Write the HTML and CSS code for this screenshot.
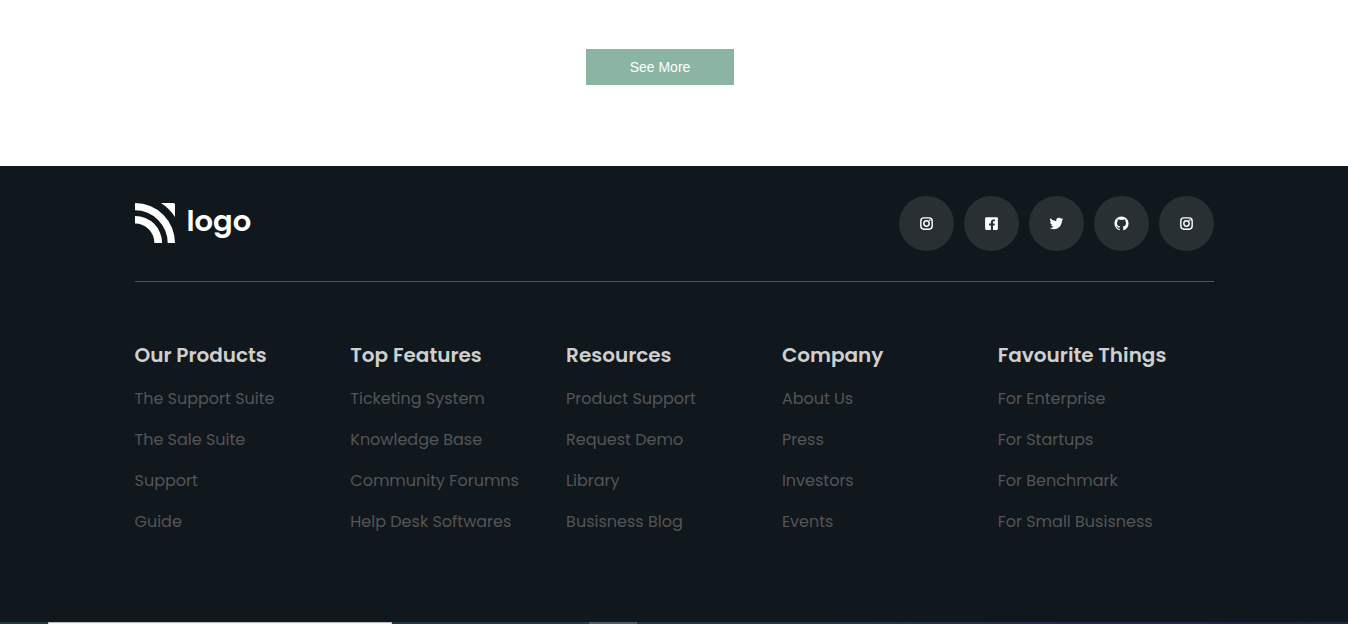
FILE: index.html
```html
<!DOCTYPE html>
<html lang="en">
<head>
<meta charset="utf-8">
<meta name="viewport" content="width=device-width, initial-scale=1">
<title>Logo</title>
<link rel="stylesheet" href="styles.css">
</head>
<body>
<svg class="sprite" aria-hidden="true">
  <symbol id="instagram" viewBox="0 0 24 24">
    <rect x="4" y="4" width="16" height="16" rx="4.3" fill="none" stroke="currentColor" stroke-width="2"/>
    <circle cx="12" cy="12" r="3.8" fill="none" stroke="currentColor" stroke-width="2"/>
    <circle cx="16.8" cy="7.2" r="1.2" fill="currentColor"/>
  </symbol>
  <symbol id="facebook" viewBox="0 0 24 24">
    <path fill="currentColor" d="M19.500 3h-15A1.500 1.500 0 0 0 3 4.500v15A1.500 1.500 0 0 0 4.500 21h6.600v-6.300H8.600v-2.700h2.500v-1.900c0-2.500 1.500-3.800 3.700-3.800.7 0 1.400.1 2.100.2v2.400h-1.200c-1.200 0-1.600.7-1.600 1.500v1.600h2.700l-.4 2.700h-2.300V21h5.400a1.500 1.500 0 0 0 1.500-1.500v-15A1.500 1.500 0 0 0 19.500 3z"/>
  </symbol>
  <symbol id="twitter" viewBox="0 0 24 24">
    <path fill="currentColor" d="M19.633 7.997c.013.175.013.349.013.523 0 5.325-4.053 11.461-11.46 11.461-2.282 0-4.402-.661-6.186-1.809.324.037.636.05.973.05a8.07 8.07 0 0 0 5.001-1.721 4.036 4.036 0 0 1-3.767-2.793c.249.037.499.062.761.062.361 0 .724-.05 1.061-.137a4.027 4.027 0 0 1-3.23-3.953v-.05c.537.299 1.16.486 1.82.511a4.022 4.022 0 0 1-1.796-3.354c0-.748.199-1.434.548-2.032a11.457 11.457 0 0 0 8.306 4.215c-.062-.3-.1-.611-.1-.923a4.026 4.026 0 0 1 4.028-4.028c1.16 0 2.207.486 2.943 1.272a7.957 7.957 0 0 0 2.556-.973 4.02 4.02 0 0 1-1.771 2.22 8.073 8.073 0 0 0 2.319-.624 8.645 8.645 0 0 1-2.019 2.083z"/>
  </symbol>
  <symbol id="github" viewBox="0 0 24 24">
    <path fill="currentColor" d="M12.026 2c-5.509 0-9.974 4.465-9.974 9.974 0 4.406 2.857 8.145 6.821 9.465.499.09.679-.217.679-.481 0-.237-.008-.865-.011-1.696-2.775.602-3.361-1.338-3.361-1.338-.452-1.152-1.107-1.459-1.107-1.459-.905-.619.069-.605.069-.605 1.002.07 1.527 1.028 1.527 1.028.89 1.524 2.336 1.084 2.902.829.091-.645.351-1.085.635-1.334-2.214-.251-4.542-1.107-4.542-4.93 0-1.087.389-1.979 1.024-2.675-.101-.253-.446-1.268.099-2.64 0 0 .837-.269 2.742 1.021a9.582 9.582 0 0 1 2.496-.336 9.554 9.554 0 0 1 2.496.336c1.906-1.291 2.742-1.021 2.742-1.021.545 1.372.203 2.387.099 2.64.64.696 1.024 1.587 1.024 2.675 0 3.833-2.33 4.675-4.552 4.922.355.308.675.916.675 1.846 0 1.334-.012 2.41-.012 2.737 0 .267.178.577.687.479C19.146 20.115 22 16.379 22 11.974 22 6.465 17.535 2 12.026 2z"/>
  </symbol>
</svg>

<main class="more">
  <button class="more-button" type="button">See More</button>
</main>

<footer class="footer">
  <div class="footer-inner">
    <div class="footer-top">
      <a class="logo" href="#">
        <svg class="logo-mark" viewBox="0 0 40 40" aria-hidden="true">
          <path fill="currentColor" d="M0 0A40 40 0 0 1 40 40H32.700A32.700 32.700 0 0 0 0 7.300zM0 12.900A27.100 27.100 0 0 1 27.100 40H19.400A19.400 19.400 0 0 0 0 20.600zM26 0H38.500A1.500 1.500 0 0 1 40 1.500V14A47.700 47.700 0 0 0 26 0z"/>
        </svg>
        <span class="logo-text">logo</span>
      </a>
      <nav class="social" aria-label="Social media">
        <a class="social-link" href="#" aria-label="Instagram"><svg class="icon"><use href="#instagram"/></svg></a>
        <a class="social-link" href="#" aria-label="Facebook"><svg class="icon"><use href="#facebook"/></svg></a>
        <a class="social-link" href="#" aria-label="Twitter"><svg class="icon"><use href="#twitter"/></svg></a>
        <a class="social-link" href="#" aria-label="GitHub"><svg class="icon"><use href="#github"/></svg></a>
        <a class="social-link" href="#" aria-label="Instagram"><svg class="icon"><use href="#instagram"/></svg></a>
      </nav>
    </div>
    <div class="columns">
      <section>
        <h2 class="column-title">Our Products</h2>
        <ul class="links">
          <li><a href="#">The Support Suite</a></li>
          <li><a href="#">The Sale Suite</a></li>
          <li><a href="#">Support</a></li>
          <li><a href="#">Guide</a></li>
        </ul>
      </section>
      <section>
        <h2 class="column-title">Top Features</h2>
        <ul class="links">
          <li><a href="#">Ticketing System</a></li>
          <li><a href="#">Knowledge Base</a></li>
          <li><a href="#">Community Forumns</a></li>
          <li><a href="#">Help Desk Softwares</a></li>
        </ul>
      </section>
      <section>
        <h2 class="column-title">Resources</h2>
        <ul class="links">
          <li><a href="#">Product Support</a></li>
          <li><a href="#">Request Demo</a></li>
          <li><a href="#">Library</a></li>
          <li><a href="#">Busisness Blog</a></li>
        </ul>
      </section>
      <section>
        <h2 class="column-title">Company</h2>
        <ul class="links">
          <li><a href="#">About Us</a></li>
          <li><a href="#">Press</a></li>
          <li><a href="#">Investors</a></li>
          <li><a href="#">Events</a></li>
        </ul>
      </section>
      <section>
        <h2 class="column-title">Favourite Things</h2>
        <ul class="links">
          <li><a href="#">For Enterprise</a></li>
          <li><a href="#">For Startups</a></li>
          <li><a href="#">For Benchmark</a></li>
          <li><a href="#">For Small Busisness</a></li>
        </ul>
      </section>
    </div>
  </div>
</footer>
<div class="taskbar">
  <div class="taskbar-search"></div>
  <div class="taskbar-app"></div>
</div>
</body>
</html>
```

FILE: styles.css
```css
* {
  box-sizing: border-box;
}

body {
  margin: 0;
  background: #fff;
  font-family: Poppins, Inter, "Open Sans", sans-serif;
}

a {
  color: inherit;
  text-decoration: none;
}

.sprite {
  display: none;
}

.more {
  display: flex;
  justify-content: center;
  padding: 49px 28px 81px 0;
}

.more-button {
  width: 148px;
  height: 36px;
  padding: 0;
  border: 0;
  background: #8bb5a2;
  color: #fff;
  font-family: "Liberation Sans", Arial, sans-serif;
  font-size: 14px;
}

.footer {
  padding: 0 24px 88px;
  background: #10171d;
}

.footer-inner {
  max-width: 1079px;
  margin: 0 auto;
}

.footer-top {
  display: flex;
  align-items: center;
  justify-content: space-between;
  padding: 30px 0;
  border-bottom: 1px solid #555;
}

.logo {
  display: flex;
  align-items: center;
  gap: 12px;
  padding-bottom: 1px;
  color: #fff;
}

.logo-mark {
  width: 40px;
  height: 40px;
}

.logo-text {
  padding-bottom: 4px;
  font-size: 29px;
  font-weight: 600;
  line-height: 36px;
}

.social {
  display: flex;
  gap: 10px;
}

.social-link {
  display: flex;
  align-items: center;
  justify-content: center;
  width: 55px;
  height: 55px;
  border-radius: 50%;
  background: #293033;
  color: #fff;
}

.icon {
  width: 17px;
  height: 17px;
}

.columns {
  display: grid;
  grid-template-columns: repeat(5, 1fr);
  padding-top: 58px;
}

.column-title {
  margin: 0 0 17px;
  color: #cfcfcf;
  font-size: 20px;
  font-weight: 600;
  line-height: 30px;
}

.links {
  display: grid;
  gap: 17px;
  margin: 0;
  padding: 0;
  list-style: none;
  color: #555;
  font-size: 16px;
  font-weight: 400;
  line-height: 24px;
}

.taskbar {
  display: flex;
  height: 2px;
  padding-left: 48px;
  background: linear-gradient(90deg, #203840, #20384a 60%, #252650 85%, #172840);
}

.taskbar-search {
  width: 344px;
  border: 1px solid #bbb;
  border-bottom: 0;
  background: #f5f5f5;
}

.taskbar-app {
  width: 48px;
  margin-left: 197px;
  background: #4c5c68;
}
```
